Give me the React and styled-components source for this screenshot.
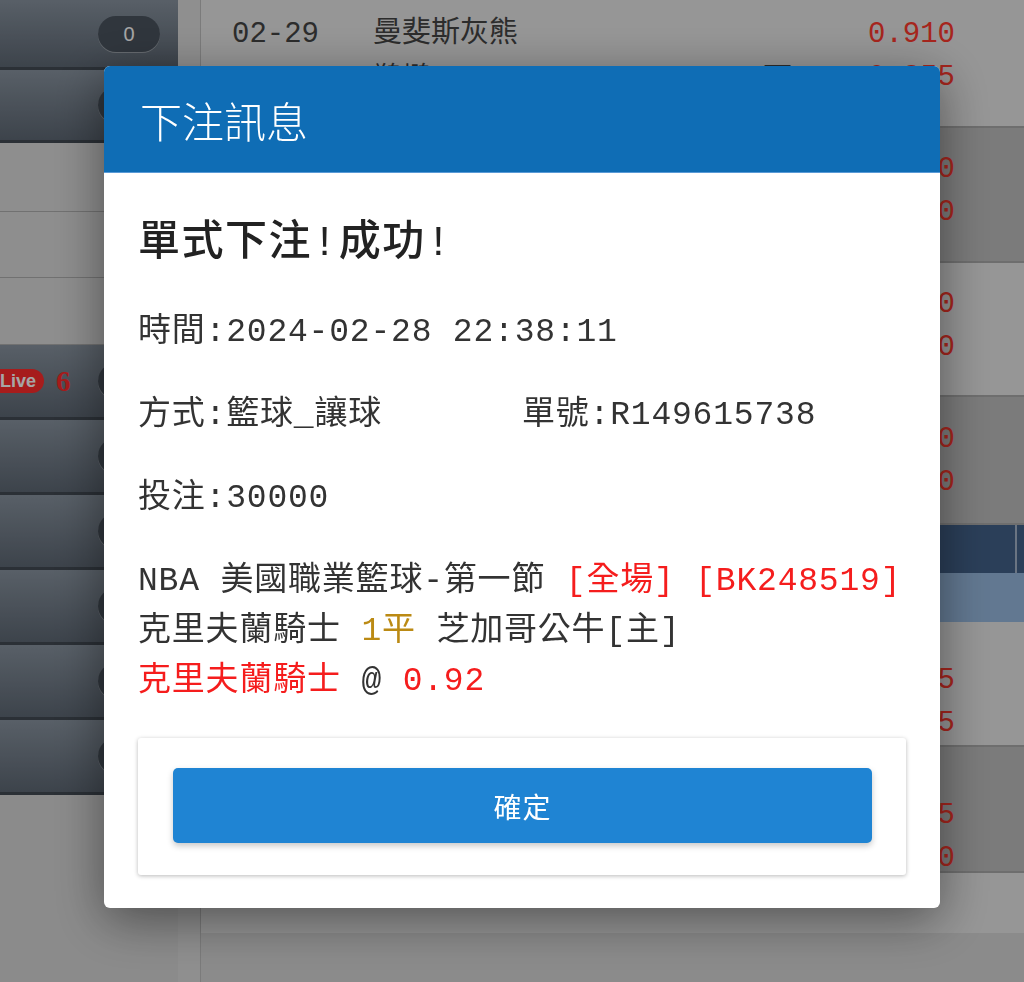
import React from 'react';
import styled, { createGlobalStyle } from 'styled-components';

const GlobalStyle = createGlobalStyle`
  html, body { margin: 0; padding: 0; }
  body {
    background: #d6d6d6;
    font-family: "Liberation Mono", "Noto Sans CJK TC", monospace;
    overflow: hidden;
  }
`;

// ============ page behind the dialog ============

const Page = styled.div`
  display: flex;
  width: 1024px;
  height: 982px;
  overflow: hidden;
  background: #d6d6d6;
`;

const Sidebar = styled.div`
  width: 178px;
  flex-shrink: 0;
  display: flex;
  flex-direction: column;
`;

const SideRow = styled.div`
  height: ${props => props.h}px;
  box-sizing: border-box;
  display: flex;
  align-items: center;
  padding-right: 18px;
  background: ${props => props.dark ? 'linear-gradient(#88939f, #5e6874)' : '#dadada'};
  border-bottom: ${props => props.dark ? '3px solid #424a53' : '1px solid #aeaeae'};
`;

const LiveBadge = styled.span`
  margin-left: -12px;
  height: 24px;
  padding: 0 8px 0 12px;
  border-radius: 12px;
  background: #ff2b2b;
  color: #fff;
  font-family: "Liberation Sans", sans-serif;
  font-weight: bold;
  font-size: 18px;
  line-height: 24px;
`;

const LiveCount = styled.span`
  margin-left: 12px;
  color: #ff2b2b;
  font-family: "Liberation Serif", serif;
  font-weight: bold;
  font-size: 29px;
`;

const CountPill = styled.span`
  margin-left: auto;
  width: 62px;
  height: 36px;
  border-radius: 18px;
  background: #4a535e;
  box-shadow: 0 1px 0 rgba(255, 255, 255, 0.35);
  color: #fff;
  font-family: "Liberation Sans", sans-serif;
  font-size: 20px;
  line-height: 36px;
  text-align: center;
`;

const Gutter = styled.div`
  width: 22px;
  flex-shrink: 0;
  background: #dcdcdc;
`;

const Main = styled.div`
  flex: 1;
  display: flex;
  flex-direction: column;
  border-left: 1px solid #bdbdbd;
`;

const MatchRow = styled.div`
  height: ${props => props.h}px;
  box-sizing: border-box;
  padding: ${props => props.pt}px 69px 0 31px;
  display: flex;
  background: ${props => props.shade ? '#bdbdbd' : '#e6e6e6'};
  border-bottom: ${props => props.last ? 'none' : '2px solid #a9a9a9'};
  font-size: 29px;
  line-height: 43px;
  color: #444;
`;

const DateCol = styled.div`
  width: 141px;
`;

const TeamCol = styled.div`
  width: 390px;
`;

const MarkCol = styled.div`
  flex: 1;
`;

const OddsCol = styled.div`
  color: #ff3a2e;
  text-align: right;
`;

const SecondLine = styled.div`
  margin-top: ${props => props.drop || 0}px;
`;

const GroupHead = styled.div`
  height: 48px;
  display: flex;
  background: #426189;
`;

const HeadCell = styled.div`
  width: 814px;
  border-right: 2px solid #a3b3c8;
`;

const GroupSub = styled.div`
  height: 49px;
  background: #97b9df;
`;

// ============ dialog ============

const Backdrop = styled.div`
  position: fixed;
  inset: 0;
  background: rgba(0, 0, 0, 0.35);
  display: flex;
  align-items: flex-start;
  padding: 66px 0 0 104px;
`;

const Modal = styled.div`
  width: 836px;
  background: #fff;
  border-radius: 6px;
  overflow: hidden;
  box-shadow: 0 12px 50px rgba(0, 0, 0, 0.45);
`;

const ModalHeader = styled.div`
  height: 107px;
  box-sizing: border-box;
  display: flex;
  align-items: center;
  padding: 0 36px;
  background: #0f6db5;
  border-bottom: 1px solid #5a9ad6;
  color: #fff;
  font-family: "Noto Sans CJK TC", sans-serif;
  font-size: 42px;
  font-weight: 300;
`;

const ModalBody = styled.div`
  padding: 43px 34px 33px;
  display: flex;
  flex-direction: column;
  gap: 33px;
  color: #333;
  font-size: 33px;
  line-height: 50px;
  letter-spacing: 0.8px;
  white-space: nowrap;
`;

const ResultTitle = styled.div`
  margin-bottom: 3px;
  color: #222;
  font-size: 42px;
  line-height: 56px;
  font-weight: 500;
  letter-spacing: 1.5px;
`;

const InfoLine = styled.div``;

const InfoGrid = styled.div`
  display: grid;
  grid-template-columns: 1fr 1fr;
`;

const Detail = styled.div`
  display: flex;
  flex-direction: column;
`;

const Red = styled.span`
  color: #f51d1d;
`;

const Gold = styled.span`
  color: #bb8a14;
`;

const ActionCard = styled.div`
  margin-top: -2px;
  padding: 30px 34px 32px 35px;
  background: #fff;
  border-radius: 3px;
  box-shadow: 0 1px 4px rgba(0, 0, 0, 0.28);
`;

const ConfirmButton = styled.button`
  display: block;
  width: 100%;
  height: 75px;
  border: none;
  border-radius: 5px;
  background: #1f84d3;
  box-shadow: 0 3px 6px rgba(0, 0, 0, 0.22);
  color: #fff;
  font-family: "Noto Sans CJK TC", sans-serif;
  font-size: 28px;
  letter-spacing: 1px;
`;

const sideRows = [
  { h: 70, dark: true, count: 0 },
  { h: 73, dark: true, count: 2 },
  { h: 69 },
  { h: 66 },
  { h: 67 },
  { h: 75, dark: true, live: 6, count: 6 },
  { h: 75, dark: true, count: 3 },
  { h: 75, dark: true, count: 4 },
  { h: 75, dark: true, count: 1 },
  { h: 75, dark: true, count: 2 },
  { h: 75, dark: true, count: 1 },
];

// rows under the dialog only show the tail of their odds
const matches = [
  { h: 128, pt: 13, drop: 3, date: '02-29', home: '曼斐斯灰熊', away: '鵜鶘', mark: '下', odds: ['0.910', '0.855'] },
  { h: 135, pt: 20, shade: true, odds: ['0.950', '0.870'] },
  { h: 134, pt: 20, odds: ['0.880', '0.940'] },
  { h: 128, pt: 21, shade: true, odds: ['0.900', '0.920'] },
];

const moreMatches = [
  { h: 125, pt: 37, odds: ['0.935', '0.885'] },
  { h: 126, pt: 47, shade: true, odds: ['0.865', '0.930'] },
  { h: 60, pt: 0, last: true, odds: ['', ''] },
];

const Match = ({ m }) => (
  <MatchRow h={m.h} pt={m.pt} shade={m.shade} last={m.last}>
    <DateCol>{m.date}</DateCol>
    <TeamCol>
      <div>{m.home}</div>
      <SecondLine drop={m.drop}>{m.away}</SecondLine>
    </TeamCol>
    <MarkCol>
      <div>&nbsp;</div>
      <SecondLine drop={m.drop}>{m.mark}</SecondLine>
    </MarkCol>
    <OddsCol>
      <div>{m.odds[0]}</div>
      <div>{m.odds[1]}</div>
    </OddsCol>
  </MatchRow>
);

const App = () => {
  return (
    <>
      <GlobalStyle />
      <Page>
        <Sidebar>
          {sideRows.map((r, i) => (
            <SideRow key={i} h={r.h} dark={r.dark}>
              {r.live && <LiveBadge>Live</LiveBadge>}
              {r.live && <LiveCount>{r.live}</LiveCount>}
              {r.dark && <CountPill>{r.count}</CountPill>}
            </SideRow>
          ))}
        </Sidebar>
        <Gutter />
        <Main>
          {matches.map((m, i) => <Match key={i} m={m} />)}
          <GroupHead>
            <HeadCell />
          </GroupHead>
          <GroupSub />
          {moreMatches.map((m, i) => <Match key={i} m={m} />)}
        </Main>
      </Page>

      <Backdrop>
        <Modal>
          <ModalHeader>下注訊息</ModalHeader>
          <ModalBody>
            <ResultTitle>單式下注!成功!</ResultTitle>
            <InfoLine>時間:2024-02-28 22:38:11</InfoLine>
            <InfoGrid>
              <div>方式:籃球_讓球</div>
              <div>單號:R149615738</div>
            </InfoGrid>
            <InfoLine>投注:30000</InfoLine>
            <Detail>
              <div>NBA 美國職業籃球-第一節 <Red>[全場] [BK248519]</Red></div>
              <div>克里夫蘭騎士 <Gold>1平</Gold> 芝加哥公牛[主]</div>
              <div><Red>克里夫蘭騎士</Red> @ <Red>0.92</Red></div>
            </Detail>
            <ActionCard>
              <ConfirmButton>確定</ConfirmButton>
            </ActionCard>
          </ModalBody>
        </Modal>
      </Backdrop>
    </>
  );
};

export default App;
